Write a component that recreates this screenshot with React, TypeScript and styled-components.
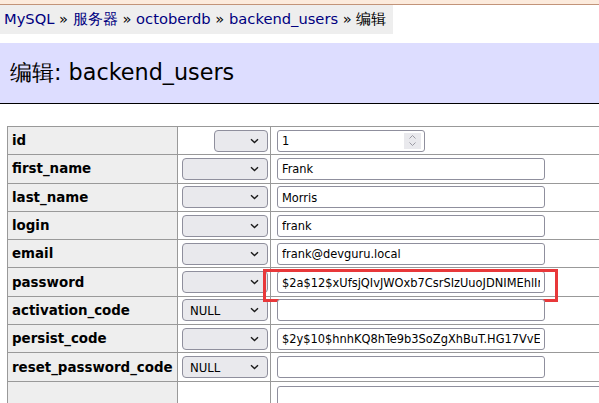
import styled, { createGlobalStyle } from "styled-components";

const GlobalStyle = createGlobalStyle`
  html, body {
    margin: 0;
    padding: 0;
    background: #fff;
    overflow: hidden;
  }
  body {
    font-family: "DejaVu Sans", Verdana, sans-serif;
    color: #000;
  }
`;

interface Field {
  name: string;
  fn: "" | "NULL";
  narrow?: boolean;
  value: string;
  number?: boolean;
  highlight?: boolean;
}

const fields: Field[] = [
  { name: "id", fn: "", narrow: true, value: "1", number: true },
  { name: "first_name", fn: "", value: "Frank" },
  { name: "last_name", fn: "", value: "Morris" },
  { name: "login", fn: "", value: "frank" },
  { name: "email", fn: "", value: "frank@devguru.local" },
  {
    name: "password",
    fn: "",
    value: "$2a$12$xUfsjQIvJWOxb7CsrSIzUuoJDNIMEhlIr",
    highlight: true,
  },
  { name: "activation_code", fn: "NULL", value: "" },
  { name: "persist_code", fn: "", value: "$2y$10$hnhKQ8hTe9b3SoZgXhBuT.HG17VvEc" },
  { name: "reset_password_code", fn: "NULL", value: "" },
];

function Chevron() {
  return (
    <svg width="9" height="6" viewBox="0 0 9 6">
      <path d="M1 1.2 L4.5 4.6 L8 1.2" fill="none" stroke="#1b1b1b" strokeWidth="1.4" />
    </svg>
  );
}

function Spinner() {
  return (
    <StyledSpinner>
      <svg width="9" height="13" viewBox="0 0 9 13">
        <path d="M1.5 4.5 L4.5 1.5 L7.5 4.5" fill="none" stroke="#9a9aa3" strokeWidth="1" />
        <path d="M1.5 8.5 L4.5 11.5 L7.5 8.5" fill="none" stroke="#9a9aa3" strokeWidth="1" />
      </svg>
    </StyledSpinner>
  );
}

function App() {
  return (
    <>
      <GlobalStyle />
      <TopStrip />
      <Breadcrumb>
        <a>MySQL</a> » <a>服务器</a> » <a>octoberdb</a> » <a>backend_users</a> » 编辑
      </Breadcrumb>
      <Heading>编辑: backend_users</Heading>
      <EditTable>
        <tbody>
          {fields.map((f) => (
            <tr key={f.name}>
              <FieldName>{f.name}</FieldName>
              <FunctionCell>
                <SelectBox $narrow={f.narrow}>
                  <span>{f.fn}</span>
                  <Chevron />
                </SelectBox>
              </FunctionCell>
              <ValueCell>
                <InputWrap>
                  <ValueInput $narrow={f.number} defaultValue={f.value} readOnly />
                  {f.number && <Spinner />}
                  {f.highlight && <Highlight />}
                </InputWrap>
              </ValueCell>
            </tr>
          ))}
          <tr>
            <FieldName />
            <FunctionCell />
            <ValueCell>
              <TextArea />
            </ValueCell>
          </tr>
        </tbody>
      </EditTable>
    </>
  );
}

const TopStrip = styled.div`
  height: 4px;
  background: #fcebdd;
  border-bottom: 1px solid #c29479;
`;

const Breadcrumb = styled.div`
  width: fit-content;
  height: 29px;
  box-sizing: border-box;
  padding: 5px 7px 0 4px;
  background: #eee;
  font-size: 14.7px;
  line-height: 18px;
  white-space: nowrap;
  color: #000;
  a {
    color: #000080;
    text-decoration: none;
  }
`;

const Heading = styled.h2`
  margin: 9px 0 0;
  height: 61px;
  box-sizing: border-box;
  padding: 0 0 0 10px;
  display: flex;
  align-items: center;
  background: #ddf;
  border-bottom: 1px solid #000;
  font-size: 22.3px;
  font-weight: normal;
  white-space: nowrap;
`;

const EditTable = styled.table`
  margin: 22px 0 0 7px;
  border-collapse: collapse;
  border: 1px solid #999;
  table-layout: fixed;
  width: 700px;
  td,
  th {
    border: 1px solid #999;
    height: 28.3px;
    padding: 0;
    box-sizing: border-box;
  }
`;

const FieldName = styled.th`
  width: 170px;
  background: #eee;
  text-align: left;
  padding-left: 4px !important;
  font-size: 13.4px;
  font-weight: bold;
  white-space: nowrap;
`;

const FunctionCell = styled.td`
  width: 93px;
  text-align: right;
  padding-right: 2px !important;
`;

const ValueCell = styled.td`
  padding-left: 6px !important;
`;

const SelectBox = styled.div<{ $narrow?: boolean }>`
  display: inline-flex;
  vertical-align: middle;
  align-items: center;
  justify-content: space-between;
  box-sizing: border-box;
  width: ${(p) => (p.$narrow ? "54px" : "86px")};
  height: 22px;
  padding: 0 8px 0 7px;
  background: #e9e9ed;
  border: 1px solid #8f8f9d;
  border-radius: 4px;
  font-family: "DejaVu Sans Condensed", "Liberation Sans", sans-serif;
  font-size: 13px;
  color: #000;
`;

const InputWrap = styled.div`
  position: relative;
  display: inline-block;
  vertical-align: middle;
`;

const ValueInput = styled.input<{ $narrow?: boolean }>`
  display: block;
  box-sizing: border-box;
  width: ${(p) => (p.$narrow ? "148px" : "268px")};
  height: 22px;
  margin: 0;
  padding: 0 4px;
  border: 1px solid #8f8f9d;
  border-radius: 3px;
  background: #fff;
  font-family: "DejaVu Sans Condensed", "Liberation Sans", sans-serif;
  font-size: 12.7px;
  color: #000;
  outline: none;
`;

const StyledSpinner = styled.div`
  position: absolute;
  top: 3px;
  right: 4px;
  width: 17px;
  height: 16px;
  background: #e9e9ed;
  display: flex;
  align-items: center;
  justify-content: center;
`;

const Highlight = styled.div`
  position: absolute;
  left: -14px;
  top: -2px;
  width: 295px;
  height: 33px;
  box-sizing: border-box;
  border: 3px solid #e8383a;
  pointer-events: none;
`;

const TextArea = styled.div`
  margin-top: 4px;
  height: 40px;
  width: 600px;
  border: 1px solid #8f8f9d;
  border-radius: 3px;
  box-sizing: border-box;
`;

export default App;
